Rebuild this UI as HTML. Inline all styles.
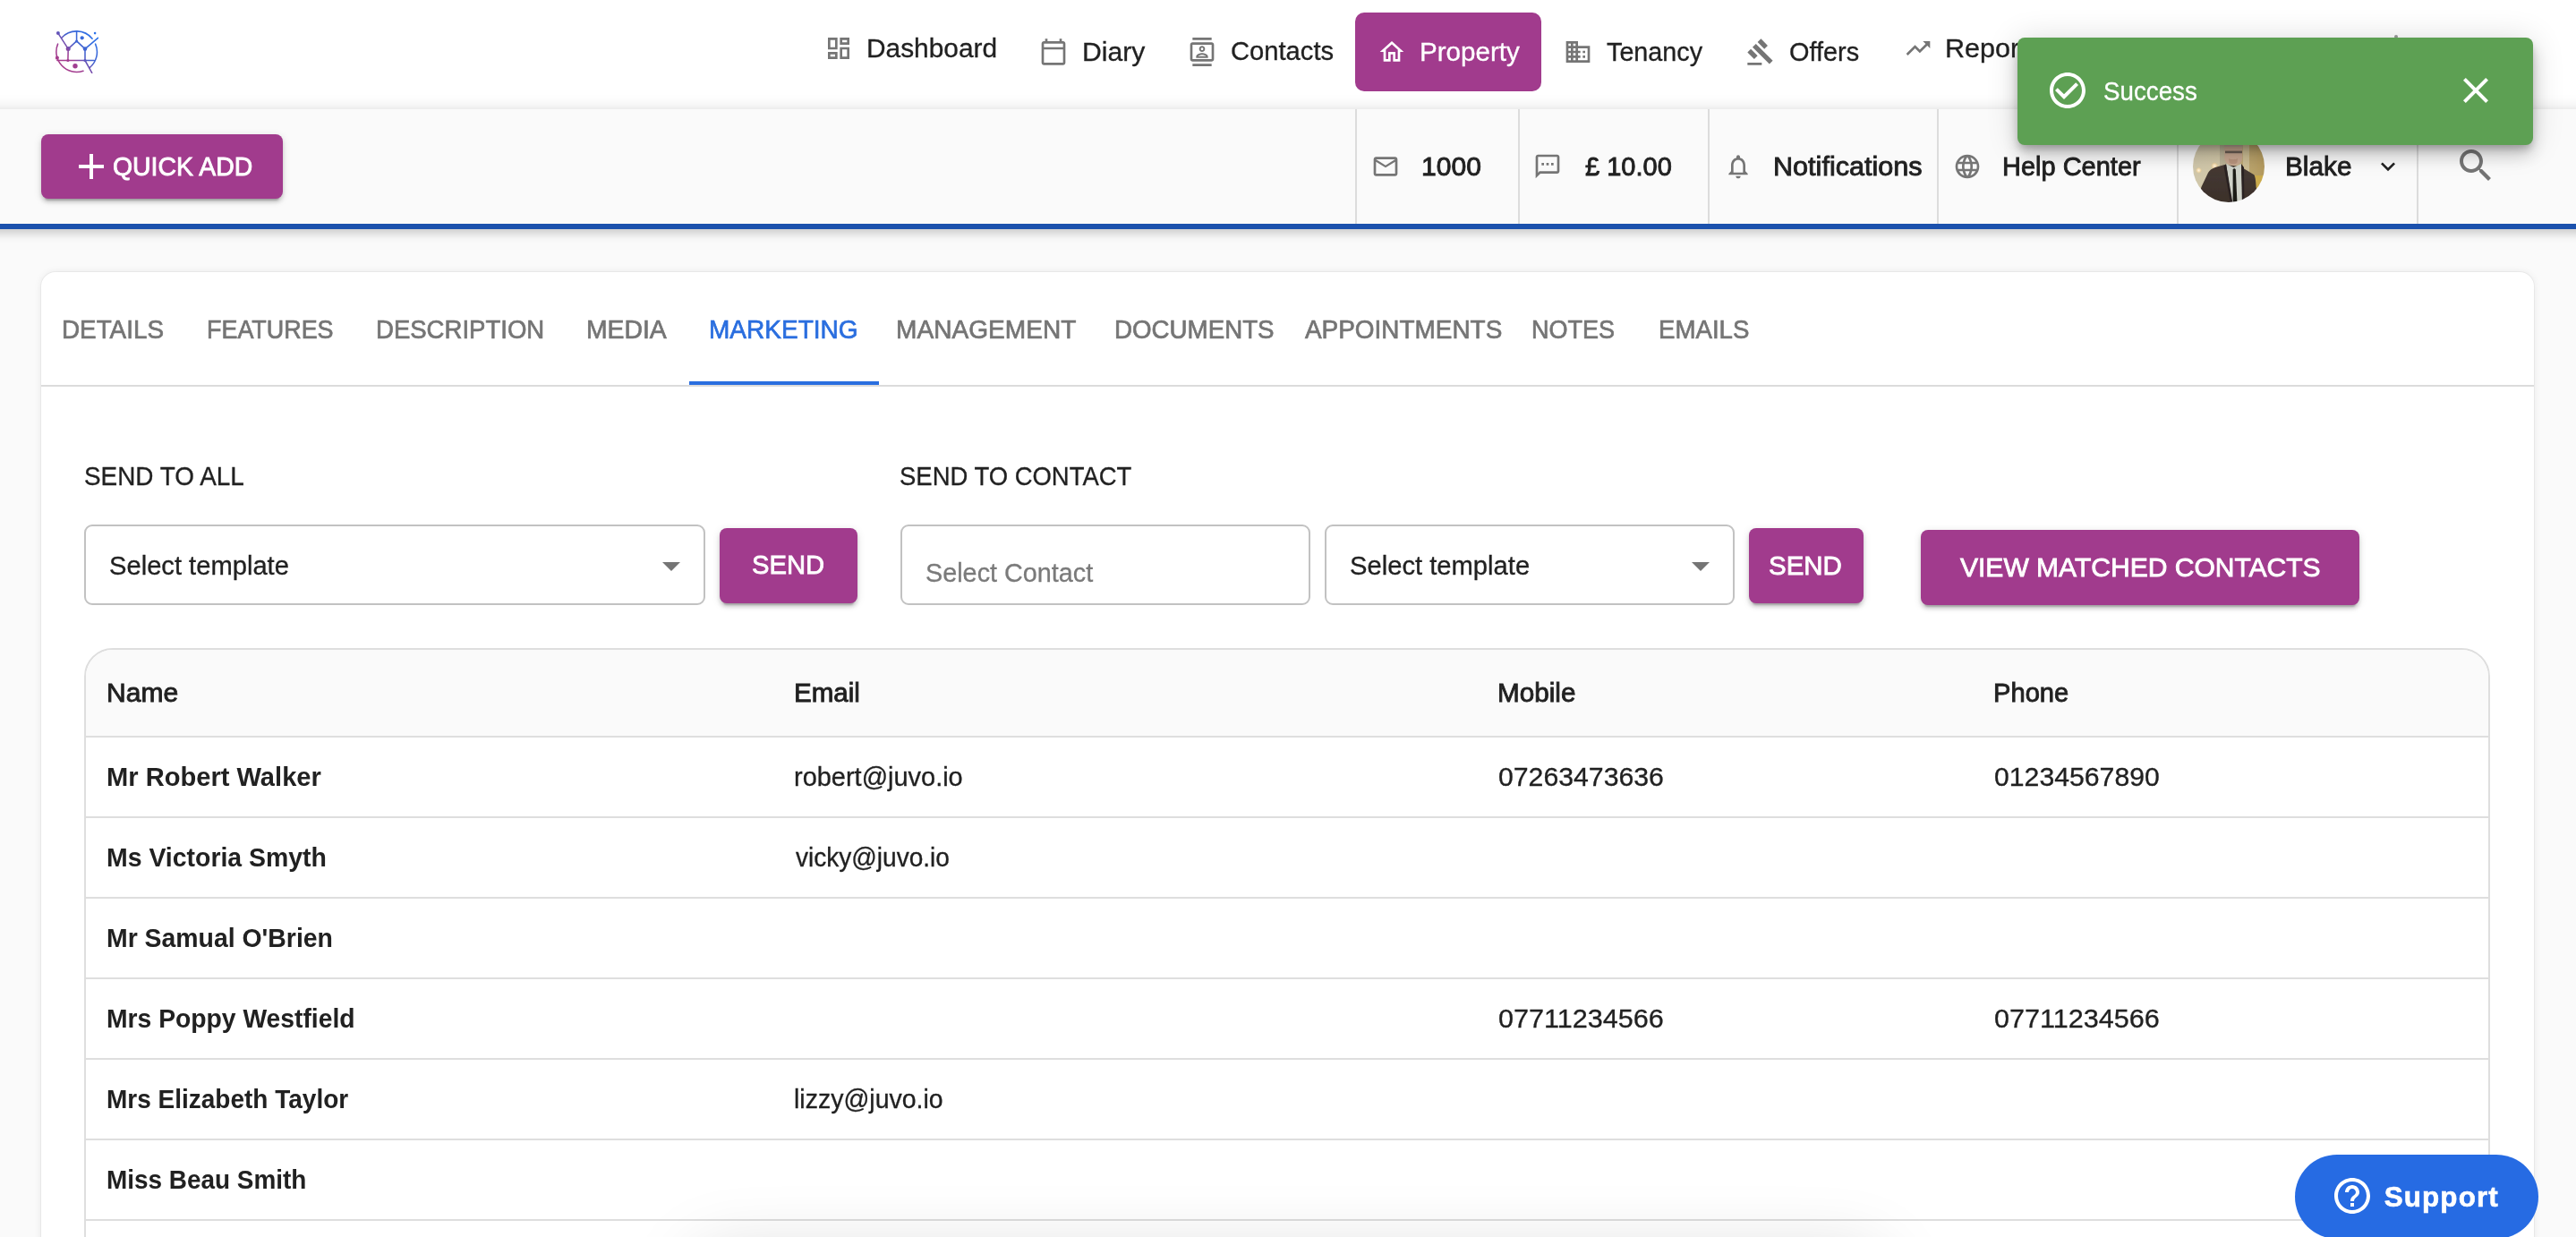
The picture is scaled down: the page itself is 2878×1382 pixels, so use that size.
<!DOCTYPE html>
<html lang="en"><head><meta charset="utf-8"><title>Property - Marketing</title>
<style>
html,body{margin:0;padding:0;width:2878px;height:1382px;overflow:hidden;background:#fafafa}
#root{width:2878px;height:1382px;position:relative;overflow:hidden;background:#fafafa;font-family:"Liberation Sans",sans-serif;color:#212121}
.a{position:absolute}
.t{position:absolute;white-space:nowrap;line-height:1;transform-origin:0 0}
.btn{position:absolute;background:#a13b8d;border-radius:8px;box-shadow:0 6px 2px -4px rgba(0,0,0,.2),0 4px 4px 0 rgba(0,0,0,.14),0 2px 10px 0 rgba(0,0,0,.12)}
.dv{position:absolute;top:122px;height:128px;width:2px;background:#dcdcdc}
.inp{position:absolute;top:586px;height:86px;border:2px solid #c2c2c2;border-radius:9px;background:#fff}
.hl{position:absolute;left:96px;width:2684px;height:2px;background:#dedede}
</style></head><body><div id="root">

<div class="a" id="nav" style="left:0;top:0;width:2878px;height:122px;background:#fff"></div>
<div class="a" id="subbar" style="left:-60px;top:122px;width:2998px;height:128px;background:#fafafa;border-bottom:6px solid #1b51ad;box-shadow:0 0 16px rgba(0,0,0,.13),0 5px 9px rgba(0,0,0,.12)"></div>
<svg class="a" style="left:62px;top:34px" width="48" height="48" viewBox="0 0 48 48" fill="none" stroke-linecap="round">
<defs><linearGradient id="lg" gradientUnits="userSpaceOnUse" x1="4" y1="44" x2="44" y2="6"><stop offset="0" stop-color="#a83a8a"/><stop offset=".33" stop-color="#a03e92"/><stop offset=".58" stop-color="#4560cc"/><stop offset="1" stop-color="#2a72ea"/></linearGradient></defs>
<g stroke="url(#lg)" stroke-width="1.55">
<path d="M6.8 8.2A22.7 22.7 0 0 1 41.1 9.2"/>
<path d="M44.6 15.1A22.7 22.7 0 0 1 38.2 41.6"/>
<path d="M2.6 15.1A22.7 22.7 0 0 0 31 45.2"/>
<path d="M2.9 3.1L14.2 20.6L23.6 11.9L33 20.6L47.5 8.3"/>
<path d="M23.6 0.8V11.9"/>
<path d="M14.2 20.6L13.9 33.5"/>
<path d="M33 20.6V33.5"/>
<path d="M1.9 33.5H43.3"/>
<path d="M33 33.5L40.7 47.4"/>
</g>
<g fill="url(#lg)">
<circle cx="2.9" cy="3.1" r="2"/><circle cx="29.7" cy="8.3" r="2.1"/><circle cx="44.1" cy="3.1" r="1.3"/>
<circle cx="14.2" cy="20.6" r="2.5"/><circle cx="33" cy="20.6" r="2.3"/><circle cx="1.9" cy="30.6" r="2"/>
<circle cx="13.9" cy="33.5" r="1.6"/><circle cx="33" cy="33.5" r="1.6"/><circle cx="22" cy="39.8" r="2.7"/><circle cx="23.6" cy="11.9" r="1.5"/>
</g></svg>
<svg class="a" style="left:920.5px;top:38px" width="32" height="32" viewBox="0 0 24 24"><path fill="#757575" d="M19 5v2h-4V5h4M9 5v6H5V5h4m10 8v6h-4v-6h4M9 17v2H5v-2h4M21 3h-8v6h8V3zM11 3H3v10h8V3zm10 8h-8v10h8V11zm-10 4H3v6h8v-6z"/></svg>
<svg class="a" style="left:1161px;top:42px" width="32" height="32" viewBox="0 0 24 24"><path fill="#757575" d="M20 3h-1V1h-2v2H7V1H5v2H4c-1.1 0-2 .9-2 2v16c0 1.1.9 2 2 2h16c1.1 0 2-.9 2-2V5c0-1.1-.9-2-2-2zm0 18H4V10h16v11zm0-13H4V5h16v3z"/></svg>
<svg class="a" style="left:1327.2px;top:42px" width="32" height="32" viewBox="0 0 24 24"><path fill="#757575" d="M20 4H4c-1.1 0-2 .9-2 2v12c0 1.1.9 2 2 2h16c1.1 0 2-.9 2-2V6c0-1.1-.9-2-2-2zm0 14H4V6h16v12zM4 0h16v2H4zm0 22h16v2H4zm8-10c1.38 0 2.5-1.12 2.5-2.5S13.38 7 12 7 9.5 8.12 9.5 9.5 10.62 12 12 12zm0-3.5c.55 0 1 .45 1 1s-.45 1-1 1-1-.45-1-1 .45-1 1-1zm5 7.49C17 13.9 13.69 13 12 13s-5 .9-5 2.99V17h10v-1.01zm-8.19-.49c.61-.52 2.03-1 3.19-1 1.17 0 2.59.48 3.2 1H8.81z"/></svg>
<div class="a" style="left:1514px;top:14px;width:208px;height:88px;background:#a13b8d;border-radius:10px"></div>
<svg class="a" style="left:1539px;top:42.2px" width="32" height="32" viewBox="0 0 24 24"><path fill="#fff" d="M12 5.69l5 4.5V18h-2v-6H9v6H7v-7.81l5-4.5M12 3L2 12h3v8h6v-6h2v6h6v-8h3L12 3z"/></svg>
<svg class="a" style="left:1746.6px;top:42.3px" width="32" height="32" viewBox="0 0 24 24"><path fill="#757575" d="M12 7V3H2v18h20V7H12zM6 19H4v-2h2v2zm0-4H4v-2h2v2zm0-4H4V9h2v2zm0-4H4V5h2v2zm4 12H8v-2h2v2zm0-4H8v-2h2v2zm0-4H8V9h2v2zm0-4H8V5h2v2zm10 12h-8v-2h2v-2h-2v-2h2v-2h-2V9h8v10zm-2-8h-2v2h2v-2zm0 4h-2v2h2v-2z"/></svg>
<svg class="a" style="left:1950.9px;top:42.4px" width="32" height="32" viewBox="0 0 24 24"><path fill="#757575" d="M1 21h12v2H1zM5.245 8.07l2.83-2.83 14.14 14.14-2.83 2.83zM12.317 1l5.66 5.66-2.83 2.83-5.66-5.66zM3.825 9.485l5.66 5.66-2.83 2.83-5.66-5.66z"/></svg>
<svg class="a" style="left:2127.1px;top:37.9px" width="32" height="32" viewBox="0 0 24 24"><path fill="#757575" d="M16 6l2.29 2.29-4.88 4.88-4-4L2 16.59 3.41 18l6-6 4 4 6.3-6.29L22 12V6z"/></svg>
<div class="a" style="left:2675px;top:39px;width:4px;height:4px;border-radius:2px;background:#9a9a9a"></div>
<div class="btn" style="left:46px;top:150px;width:270px;height:72px"></div>
<svg class="a" style="left:78px;top:162px" width="48" height="48" viewBox="0 0 24 24"><path fill="#fff" d="M19 13h-6v6h-2v-6H5v-2h6V5h2v6h6v2z"/></svg>
<div class="dv" style="left:1514px"></div>
<div class="dv" style="left:1696px"></div>
<div class="dv" style="left:1908px"></div>
<div class="dv" style="left:2164px"></div>
<div class="dv" style="left:2432px"></div>
<div class="dv" style="left:2700px"></div>
<svg class="a" style="left:1532px;top:170px" width="32" height="32" viewBox="0 0 24 24"><path fill="#757575" d="M20 4H4c-1.1 0-1.99.9-1.99 2L2 18c0 1.1.9 2 2 2h16c1.1 0 2-.9 2-2V6c0-1.1-.9-2-2-2zm0 14H4V8l8 5 8-5v10zm-8-7L4 6h16l-8 5z"/></svg>
<svg class="a" style="left:1713.3px;top:170px" width="32" height="32" viewBox="0 0 24 24"><path fill="#757575" d="M20 2H4c-1.1 0-2 .9-2 2v18l4-4h14c1.1 0 2-.9 2-2V4c0-1.1-.9-2-2-2zm0 14H5.17L4 17.17V4h16v12zM7 9h2v2H7zm8 0h2v2h-2zm-4 0h2v2h-2z"/></svg>
<svg class="a" style="left:1925.8px;top:170.3px" width="32" height="32" viewBox="0 0 24 24"><path fill="#757575" d="M12 22c1.1 0 2-.9 2-2h-4c0 1.1.9 2 2 2zm6-6v-5c0-3.07-1.63-5.64-4.5-6.32V4c0-.83-.67-1.5-1.5-1.5s-1.5.67-1.5 1.5v.68C7.64 5.36 6 7.92 6 11v5l-2 2v1h16v-1l-2-2zm-2 1H8v-6c0-2.48 1.51-4.5 4-4.5s4 2.02 4 4.5v6z"/></svg>
<svg class="a" style="left:2181.6px;top:170.3px" width="32" height="32" viewBox="0 0 24 24"><path fill="#757575" d="M11.99 2C6.47 2 2 6.48 2 12s4.47 10 9.99 10C17.52 22 22 17.52 22 12S17.52 2 11.99 2zm6.93 6h-2.95c-.32-1.25-.78-2.45-1.38-3.56 1.84.63 3.37 1.91 4.33 3.56zM12 4.04c.83 1.2 1.48 2.53 1.91 3.96h-3.82c.43-1.43 1.08-2.76 1.91-3.96zM4.26 14C4.1 13.36 4 12.69 4 12s.1-1.36.26-2h3.38c-.08.66-.14 1.32-.14 2 0 .68.06 1.34.14 2H4.26zm.82 2h2.95c.32 1.25.78 2.45 1.38 3.56-1.84-.63-3.37-1.9-4.33-3.56zm2.95-8H5.08c.96-1.66 2.49-2.93 4.33-3.56C8.81 5.55 8.35 6.75 8.03 8zM12 19.96c-.83-1.2-1.48-2.53-1.91-3.96h3.82c-.43 1.43-1.08 2.76-1.91 3.96zM14.34 14H9.66c-.09-.66-.16-1.32-.16-2 0-.68.07-1.35.16-2h4.68c.09.65.16 1.32.16 2 0 .68-.07 1.34-.16 2zm.25 5.56c.6-1.11 1.06-2.31 1.38-3.56h2.95c-.96 1.65-2.49 2.93-4.33 3.56zM16.36 14c.08-.66.14-1.32.14-2 0-.68-.06-1.34-.14-2h3.38c.16.64.26 1.31.26 2s-.1 1.36-.26 2h-3.38z"/></svg>
<svg class="a" style="left:2652.3px;top:170.2px" width="32" height="32" viewBox="0 0 24 24"><path fill="#212121" d="M16.59 8.59L12 13.17 7.41 8.59 6 10l6 6 6-6z"/></svg>
<svg class="a" style="left:2742.2px;top:161.2px" width="48" height="48" viewBox="0 0 24 24"><path fill="#757575" d="M15.5 14h-.79l-.28-.27C15.41 12.59 16 11.11 16 9.5 16 5.91 13.09 3 9.5 3S3 5.91 3 9.5 5.91 16 9.5 16c1.61 0 3.09-.59 4.23-1.57l.27.28v.79l5 4.99L20.49 19l-4.99-5zm-6 0C7.01 14 5 11.99 5 9.5S7.01 5 9.5 5 14 7.01 14 9.5 11.99 14 9.5 14z"/></svg>
<svg class="a" style="left:2450px;top:146px" width="80" height="80" viewBox="0 0 80 80">
<defs><clipPath id="av"><circle cx="40" cy="40" r="40"/></clipPath>
<filter id="sf" x="-10%" y="-10%" width="120%" height="120%"><feGaussianBlur stdDeviation=".7"/></filter>
<linearGradient id="bg" x1="0" y1="0" x2="1" y2="0"><stop offset="0" stop-color="#cfc6aa"/><stop offset=".4" stop-color="#d3c9a9"/><stop offset=".7" stop-color="#bda873"/><stop offset="1" stop-color="#b2975a"/></linearGradient>
<radialGradient id="bk"><stop offset="0" stop-color="#fff6e0"/><stop offset=".5" stop-color="#f6ddb0"/><stop offset="1" stop-color="#e8c888" stop-opacity="0"/></radialGradient>
<linearGradient id="su" x1="0" y1="0" x2="0" y2="1"><stop offset="0" stop-color="#463a34"/><stop offset="1" stop-color="#3a2f29"/></linearGradient></defs>
<g clip-path="url(#av)"><g filter="url(#sf)">
<rect x="-4" y="-4" width="88" height="88" fill="url(#bg)"/>
<rect x="30" y="-4" width="8" height="44" fill="#a89f88" opacity=".5"/>
<rect x="56" y="-4" width="7" height="50" fill="#d8cfae" opacity=".6"/>
<circle cx="24.2" cy="39.3" r="4.2" fill="url(#bk)"/><circle cx="6.5" cy="44.3" r="3.6" fill="url(#bk)"/>
<rect x="69" y="50" width="14" height="15" fill="#cfae48" opacity=".8"/>
<path d="M35.3 8h20v22c0 5-4 9-10 9s-10-4-10-9z" fill="#c8a891"/>
<path d="M35 6h20.5v12H35z" fill="#bda696"/>
<path d="M36 22.6h19v2.6H36z" fill="#5a5048" opacity=".85"/>
<path d="M40 31c2 1.6 8 1.6 10 0l-.6 4.8c-2.4 2-6.4 2-8.800 0z" fill="#b48f78" opacity=".8"/>
<path d="M4 84L9.400 63L17 47Q19 43 25 41L35.300 38L53 40L68.300 49.300Q70 51 70.600 63L76 84z" fill="url(#su)"/>
<path d="M37 37L45.500 41L54 37L55.5 76L55 84H44z" fill="#cfd2c8"/>
<path d="M44.6 43.200l1.6-1.200 1.600 1.200L49.600 84h-5z" fill="#1f1b19"/>
<path d="M37 37L34.500 40L42.500 84H45z" fill="#2c2320"/>
<path d="M54 37L57 41L57.500 84H55z" fill="#2c2320"/>
</g></g></svg>
<div class="a" id="card" style="left:46px;top:304px;width:2785px;height:1200px;background:#fff;border-radius:16px;box-shadow:0 0 0 1px rgba(0,0,0,.035),0 0 8px rgba(0,0,0,.08)"></div>
<div class="a" style="left:46px;top:430px;width:2785px;height:2px;background:#dbdbdb"></div>
<div class="a" style="left:770px;top:426px;width:212px;height:4px;background:#2a6edf"></div>
<div class="inp" style="left:94px;width:690px"></div>
<svg class="a" style="left:726px;top:607.6px" width="48" height="48" viewBox="0 0 24 24"><path fill="#757575" d="M7 10l5 5 5-5z"/></svg>
<div class="btn" style="left:804px;top:590px;width:154px;height:84px"></div>
<div class="inp" style="left:1006px;width:454px"></div>
<div class="inp" style="left:1480px;width:454px"></div>
<svg class="a" style="left:1876px;top:607.6px" width="48" height="48" viewBox="0 0 24 24"><path fill="#757575" d="M7 10l5 5 5-5z"/></svg>
<div class="btn" style="left:1954px;top:590px;width:128px;height:84px"></div>
<div class="btn" style="left:2146px;top:592px;width:490px;height:84px"></div>
<div class="a" id="tbl" style="left:94px;top:724px;width:2684px;height:800px;border:2px solid #dedede;border-radius:32px;background:#fff;overflow:hidden"><div style="height:96px;background:#fafafa"></div></div>
<div class="hl" style="top:822px"></div>
<div class="hl" style="top:912px"></div>
<div class="hl" style="top:1002px"></div>
<div class="hl" style="top:1092px"></div>
<div class="hl" style="top:1182px"></div>
<div class="hl" style="top:1272px"></div>
<div class="hl" style="top:1362px"></div>
<div class="a" style="left:2564px;top:1290px;width:272px;height:94px;border-radius:47px;background:#266be3"></div>
<svg class="a" style="left:2604px;top:1312px" width="48" height="48" viewBox="0 0 24 24"><path fill="#fff" d="M11 18h2v-2h-2v2zm1-16C6.48 2 2 6.48 2 12s4.48 10 10 10 10-4.48 10-10S17.52 2 12 2zm0 18c-4.41 0-8-3.59-8-8s3.59-8 8-8 8 3.59 8 8-3.59 8-8 8zm0-14c-2.21 0-4 1.79-4 4h2c0-1.1.9-2 2-2s2 .9 2 2c0 2-3 1.75-3 5h2c0-2.25 3-2.5 3-5 0-2.21-1.79-4-4-4z"/></svg>
<div class="a" style="left:790px;top:1412px;width:1300px;height:80px;border-radius:8px;box-shadow:0 0 80px 12px rgba(0,0,0,.15)"></div>
<div class="a" id="txt" style="left:0;top:0;width:2878px;height:1382px;will-change:transform">
<span class="t" style="left:967.9px;top:39.8px;font-size:28.6px;-webkit-text-stroke:0.3px #212121;transform:scaleX(1.0441)">Dashboard</span>
<span class="t" style="left:1208.5px;top:43.9px;font-size:28.6px;-webkit-text-stroke:0.3px #212121;transform:scaleX(1.0523)">Diary</span>
<span class="t" style="left:1375.4px;top:43.4px;font-size:28.6px;-webkit-text-stroke:0.3px #212121;transform:scaleX(1.0198)">Contacts</span>
<span class="t" style="left:1586.2px;top:44.0px;font-size:28.6px;color:#fff;-webkit-text-stroke:0.3px #fff;transform:scaleX(1.0349)">Property</span>
<span class="t" style="left:1795.0px;top:43.6px;font-size:28.6px;-webkit-text-stroke:0.3px #212121;transform:scaleX(1.0056)">Tenancy</span>
<span class="t" style="left:1999.4px;top:43.6px;font-size:28.6px;-webkit-text-stroke:0.3px #212121;transform:scaleX(1.0105)">Offers</span>
<span class="t" style="left:2173.3px;top:39.5px;font-size:28.6px;-webkit-text-stroke:0.3px #212121;transform:scaleX(1.0680)">Reports</span>
<span class="t" style="left:126.3px;top:171.8px;font-size:28.6px;color:#fff;-webkit-text-stroke:0.85px #fff;transform:scaleX(0.9936)">QUICK ADD</span>
<span class="t" style="left:1588.2px;top:171.7px;font-size:28.6px;-webkit-text-stroke:0.85px #212121;transform:scaleX(1.0508)">1000</span>
<span class="t" style="left:1770.6px;top:171.7px;font-size:28.6px;-webkit-text-stroke:0.85px #212121;transform:scaleX(1.0147)">£ 10.00</span>
<span class="t" style="left:1981.0px;top:171.7px;font-size:28.6px;-webkit-text-stroke:0.85px #212121;transform:scaleX(1.0699)">Notifications</span>
<span class="t" style="left:2237.2px;top:171.8px;font-size:28.6px;-webkit-text-stroke:0.85px #212121;transform:scaleX(1.0139)">Help Center</span>
<span class="t" style="left:2553.4px;top:171.8px;font-size:28.6px;-webkit-text-stroke:0.85px #212121;transform:scaleX(1.0406)">Blake</span>
<span class="t" style="left:69.3px;top:353.6px;font-size:28.6px;color:#757575;-webkit-text-stroke:0.7px #757575;transform:scaleX(0.9737)">DETAILS</span>
<span class="t" style="left:230.6px;top:353.6px;font-size:28.6px;color:#757575;-webkit-text-stroke:0.7px #757575;transform:scaleX(0.9412)">FEATURES</span>
<span class="t" style="left:419.8px;top:353.6px;font-size:28.6px;color:#757575;-webkit-text-stroke:0.7px #757575;transform:scaleX(0.9630)">DESCRIPTION</span>
<span class="t" style="left:655.0px;top:353.6px;font-size:28.6px;color:#757575;-webkit-text-stroke:0.7px #757575;transform:scaleX(0.9910)">MEDIA</span>
<span class="t" style="left:1000.9px;top:353.6px;font-size:28.6px;color:#757575;-webkit-text-stroke:0.7px #757575;transform:scaleX(0.9828)">MANAGEMENT</span>
<span class="t" style="left:1245.2px;top:353.6px;font-size:28.6px;color:#757575;-webkit-text-stroke:0.7px #757575;transform:scaleX(0.9692)">DOCUMENTS</span>
<span class="t" style="left:1458.1px;top:353.6px;font-size:28.6px;color:#757575;-webkit-text-stroke:0.7px #757575;transform:scaleX(0.9764)">APPOINTMENTS</span>
<span class="t" style="left:1711.4px;top:353.6px;font-size:28.6px;color:#757575;-webkit-text-stroke:0.7px #757575;transform:scaleX(0.9448)">NOTES</span>
<span class="t" style="left:1852.5px;top:353.6px;font-size:28.6px;color:#757575;-webkit-text-stroke:0.7px #757575;transform:scaleX(0.9667)">EMAILS</span>
<span class="t" style="left:792.2px;top:353.6px;font-size:28.6px;color:#2a6edf;-webkit-text-stroke:0.7px #2a6edf;transform:scaleX(0.9801)">MARKETING</span>
<span class="t" style="left:93.8px;top:518.2px;font-size:28.6px;-webkit-text-stroke:0.3px #212121;transform:scaleX(0.9758)">SEND TO ALL</span>
<span class="t" style="left:1005.1px;top:518.2px;font-size:28.6px;-webkit-text-stroke:0.3px #212121;transform:scaleX(0.9602)">SEND TO CONTACT</span>
<span class="t" style="left:121.6px;top:617.6px;font-size:28.6px;-webkit-text-stroke:0.3px #212121;transform:scaleX(1.0195)">Select template</span>
<span class="t" style="left:1033.7px;top:625.9px;font-size:28.6px;color:#7a7a7a;-webkit-text-stroke:0.3px #7a7a7a;transform:scaleX(1.0070)">Select Contact</span>
<span class="t" style="left:1507.6px;top:617.6px;font-size:28.6px;-webkit-text-stroke:0.3px #212121;transform:scaleX(1.0205)">Select template</span>
<span class="t" style="left:839.9px;top:615.4px;font-size:30.4px;color:#fff;-webkit-text-stroke:0.85px #fff;transform:scaleX(0.9602)">SEND</span>
<span class="t" style="left:1976.4px;top:616.1px;font-size:30.4px;color:#fff;-webkit-text-stroke:0.85px #fff;transform:scaleX(0.9687)">SEND</span>
<span class="t" style="left:2190.0px;top:617.8px;font-size:30.4px;color:#fff;-webkit-text-stroke:0.85px #fff;transform:scaleX(0.9882)">VIEW MATCHED CONTACTS</span>
<span class="t" style="left:118.6px;top:759.6px;font-size:28.6px;-webkit-text-stroke:0.85px #212121;transform:scaleX(1.0507)">Name</span>
<span class="t" style="left:887.0px;top:759.6px;font-size:28.6px;-webkit-text-stroke:0.85px #212121;transform:scaleX(1.0324)">Email</span>
<span class="t" style="left:1673.0px;top:759.6px;font-size:28.6px;-webkit-text-stroke:0.85px #212121;transform:scaleX(1.0383)">Mobile</span>
<span class="t" style="left:2226.8px;top:759.6px;font-size:28.6px;-webkit-text-stroke:0.85px #212121;transform:scaleX(1.0188)">Phone</span>
<span class="t" style="left:118.7px;top:853.9px;font-size:28.6px;font-weight:700;transform:scaleX(1.0176)">Mr Robert Walker</span>
<span class="t" style="left:887.1px;top:853.9px;font-size:28.6px;-webkit-text-stroke:0.3px #212121;transform:scaleX(1.0126)">robert@juvo.io</span>
<span class="t" style="left:1674.0px;top:853.9px;font-size:28.6px;-webkit-text-stroke:0.3px #212121;transform:scaleX(1.0572)">07263473636</span>
<span class="t" style="left:2227.7px;top:853.9px;font-size:28.6px;-webkit-text-stroke:0.3px #212121;transform:scaleX(1.0566)">01234567890</span>
<span class="t" style="left:118.7px;top:943.9px;font-size:28.6px;font-weight:700;transform:scaleX(0.9943)">Ms Victoria Smyth</span>
<span class="t" style="left:889.1px;top:943.9px;font-size:28.6px;-webkit-text-stroke:0.3px #212121;transform:scaleX(0.9810)">vicky@juvo.io</span>
<span class="t" style="left:118.7px;top:1033.9px;font-size:28.6px;font-weight:700;transform:scaleX(0.9932)">Mr Samual O&#x27;Brien</span>
<span class="t" style="left:118.7px;top:1123.9px;font-size:28.6px;font-weight:700;transform:scaleX(0.9888)">Mrs Poppy Westfield</span>
<span class="t" style="left:1674.0px;top:1123.9px;font-size:28.6px;-webkit-text-stroke:0.3px #212121;transform:scaleX(1.0696)">07711234566</span>
<span class="t" style="left:2227.7px;top:1123.9px;font-size:28.6px;-webkit-text-stroke:0.3px #212121;transform:scaleX(1.0690)">07711234566</span>
<span class="t" style="left:118.7px;top:1213.9px;font-size:28.6px;font-weight:700;transform:scaleX(0.9792)">Mrs Elizabeth Taylor</span>
<span class="t" style="left:887.1px;top:1213.9px;font-size:28.6px;-webkit-text-stroke:0.3px #212121;transform:scaleX(0.9963)">lizzy@juvo.io</span>
<span class="t" style="left:118.7px;top:1303.9px;font-size:28.6px;font-weight:700;transform:scaleX(0.9764)">Miss Beau Smith</span>
<span class="t" style="left:2663.7px;top:1322.0px;font-size:31.4px;font-weight:700;color:#fff;-webkit-text-stroke:0.6px #fff;letter-spacing:1.12px">Support</span>
</div>
<div class="a" id="toast" style="left:2254px;top:42px;width:576px;height:120px;border-radius:8px;background:#5da053;box-shadow:0 6px 10px -2px rgba(0,0,0,.25),0 12px 20px 0 rgba(0,0,0,.16),0 2px 36px 0 rgba(0,0,0,.14)"></div>
<svg class="a" style="left:2286px;top:77px" width="48" height="48" viewBox="0 0 24 24"><path fill="#fff" d="M16.59 7.58L10 14.17l-3.59-3.58L5 12l5 5 8-8zM12 2C6.48 2 2 6.48 2 12s4.48 10 10 10 10-4.48 10-10S17.52 2 12 2zm0 18c-4.42 0-8-3.58-8-8s3.58-8 8-8 8 3.58 8 8-3.58 8-8 8z"/></svg>
<svg class="a" style="left:2742px;top:77px" width="48" height="48" viewBox="0 0 24 24"><path fill="#fff" d="M19 6.41L17.59 5 12 10.59 6.41 5 5 6.41 10.59 12 5 17.59 6.41 19 12 13.41 17.59 19 19 17.59 13.41 12z"/></svg>
<div class="a" style="left:0;top:0;width:2878px;height:1382px;will-change:transform"><span class="t" style="left:2349.6px;top:87.8px;font-size:28.6px;color:#fff;-webkit-text-stroke:0.3px #fff;transform:scaleX(0.9698)">Success</span></div>
</div></body></html>
